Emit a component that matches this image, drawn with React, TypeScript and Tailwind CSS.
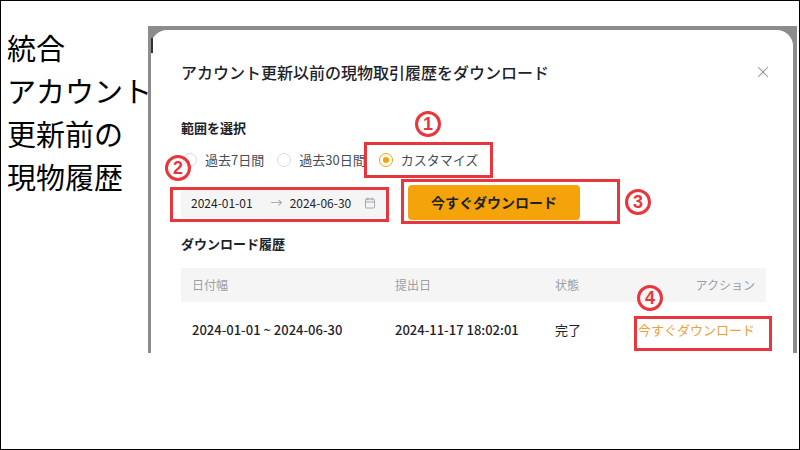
import { X, Calendar } from "lucide-react";

const jp = { fontFamily: '"Noto Sans CJK JP", "Noto Sans", sans-serif' };

const Radio = ({ label, checked }: { label: string; checked?: boolean }) => (
  <div className="flex items-center gap-[8px] mr-[13px]">
    <span
      className={
        checked
          ? "w-[14px] h-[14px] rounded-full border border-[#f0a30a] flex items-center justify-center"
          : "w-[14px] h-[14px] rounded-full border border-[#dcdcdc]"
      }
    >
      {checked && <span className="w-[6px] h-[6px] rounded-full bg-[#f0a30a]" />}
    </span>
    <span className="text-[13px] text-[#474d57]">{label}</span>
  </div>
);

const Mark = ({ n, className }: { n: string; className: string }) => (
  <span
    className={
      "absolute w-[26px] h-[26px] rounded-full border-[3px] border-[#e8363c] flex items-center justify-center text-[18px] leading-none font-bold text-[#e8363c] " +
      className
    }
    style={{ fontFamily: '"Liberation Sans", sans-serif' }}
  >
    {n}
  </span>
);

const App = () => {
  return (
    <div
      className="relative w-[800px] h-[450px] border border-black bg-white flex overflow-hidden"
      style={jp}
    >
      <div className="w-[147px] pt-[25px] pl-[6px] text-[29px] leading-[43px] text-black whitespace-nowrap">
        <div>統合</div>
        <div>アカウント</div>
        <div>更新前の</div>
        <div>現物履歴</div>
      </div>

      <div className="relative mt-[25px] w-[649px] h-[327px] bg-[#8c8c8c] pt-[4px] pl-[3px] pr-[4px]">
        <div className="h-full bg-white rounded-t-[16px] pl-[30px] pr-[27px] pt-[30px]">
          <div className="flex items-center justify-between h-[24px]">
            <h2 className="text-[16px] font-medium text-[#1e2329]">
              アカウント更新以前の現物取引履歴をダウンロード
            </h2>
            <X size={18} strokeWidth={1.4} className="text-[#8a8f99] mr-[-6px]" />
          </div>

          <div className="mt-[34px] text-[13px] leading-[20px] font-bold text-[#1e2329]">
            範囲を選択
          </div>

          <div className="mt-[12px] flex items-center h-[20px] pl-[2px]">
            <Radio label="過去7日間" />
            <Radio label="過去30日間" />
            <Radio label="カスタマイズ" checked />
          </div>

          <div className="mt-[15px] flex items-center h-[35px]">
            <div className="w-[204px] h-[30px] bg-[#f5f5f5] rounded-[3px] flex items-center pl-[10px] pr-[9px] text-[12px] text-[#1e2329]">
              <span>2024-01-01</span>
              <span className="ml-[18px] text-[#9aa0a6] text-[12px]">→</span>
              <span className="ml-[7px]">2024-06-30</span>
              <Calendar size={12} strokeWidth={1.5} className="ml-auto text-[#8a8f99]" />
            </div>
            <button className="ml-[23px] w-[172px] h-[35px] rounded-[4px] bg-[#f4a30b] text-[14px] font-bold text-[#1e2329]">
              今すぐダウンロード
            </button>
          </div>

          <div className="mt-[14px] text-[13px] leading-[20px] font-bold text-[#1e2329]">
            ダウンロード履歴
          </div>

          <div className="mt-[14px]">
            <div className="flex items-center h-[34px] bg-[#f5f5f5] px-[11px] text-[12px] text-[#9aa0a6]">
              <span className="w-[203px]">日付幅</span>
              <span className="w-[160px]">提出日</span>
              <span>状態</span>
              <span className="ml-auto">アクション</span>
            </div>
            <div className="flex items-center h-[56px] px-[11px] text-[13px] text-[#1e2329]">
              <span className="w-[203px] font-medium">2024-01-01 ~ 2024-06-30</span>
              <span className="w-[160px] font-medium">2024-11-17 18:02:01</span>
              <span>完了</span>
              <span className="ml-auto text-[#e9a33d]">今すぐダウンロード</span>
            </div>
          </div>
        </div>
        <div className="absolute left-[3px] top-[12px] w-[2px] h-[15px] bg-[#333]" />
      </div>

      {/* annotations */}
      <div className="absolute left-[363px] top-[141px] w-[129px] h-[36px] border-[3px] border-[#e8363c]" />
      <div className="absolute left-[169px] top-[186px] w-[219px] h-[35px] border-[3px] border-[#e8363c]" />
      <div className="absolute left-[400px] top-[178px] w-[219px] h-[45px] border-[3px] border-[#e8363c]" />
      <div className="absolute left-[633px] top-[315px] w-[138px] h-[35px] border-[3px] border-[#e8363c]" />

      <Mark n="1" className="left-[414px] top-[110px]" />
      <Mark n="2" className="left-[164px] top-[154px]" />
      <Mark n="3" className="left-[624px] top-[188px]" />
      <Mark n="4" className="left-[636px] top-[284px]" />
    </div>
  );
};

export default App;
